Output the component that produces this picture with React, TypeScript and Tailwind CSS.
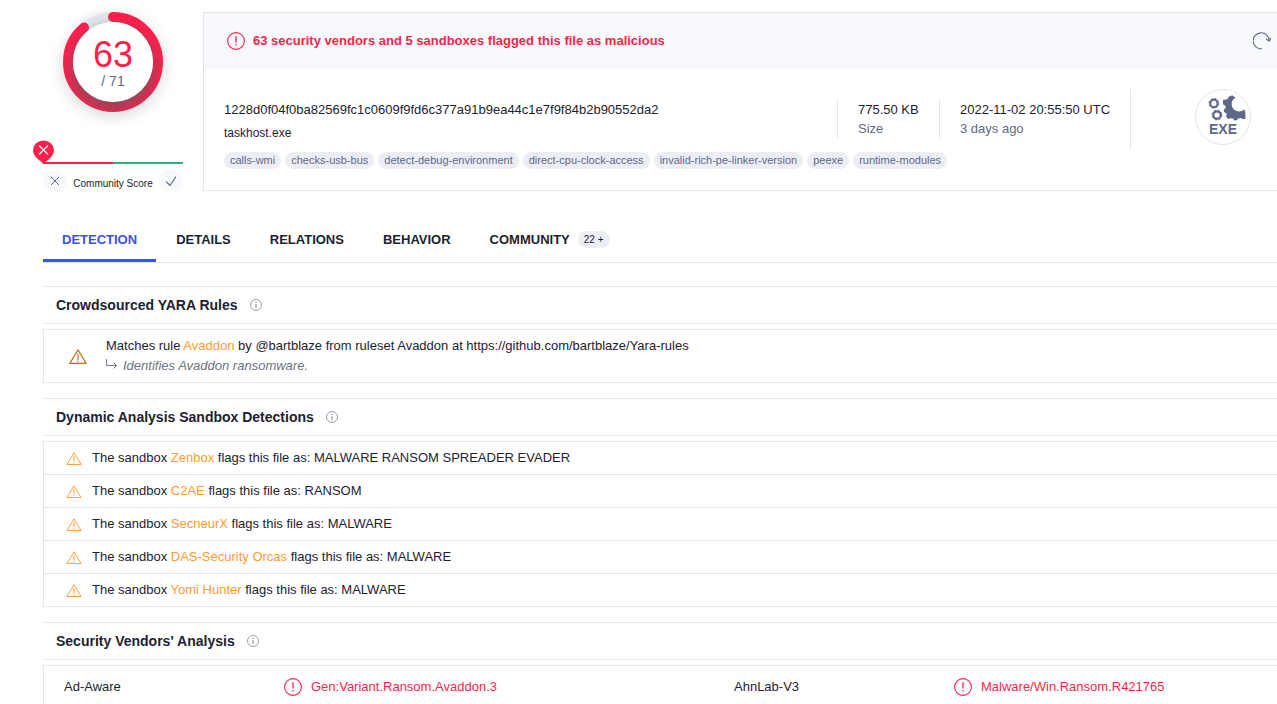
import type { ReactNode } from "react";

const tags = [
  "calls-wmi",
  "checks-usb-bus",
  "detect-debug-environment",
  "direct-cpu-clock-access",
  "invalid-rich-pe-linker-version",
  "peexe",
  "runtime-modules",
];

const tabs = ["DETAILS", "RELATIONS", "BEHAVIOR"];

const sandboxes = [
  { name: "Zenbox", verdict: "MALWARE RANSOM SPREADER EVADER" },
  { name: "C2AE", verdict: "RANSOM" },
  { name: "SecneurX", verdict: "MALWARE" },
  { name: "DAS-Security Orcas", verdict: "MALWARE" },
  { name: "Yomi Hunter", verdict: "MALWARE" },
];

const vendors = [
  ["Ad-Aware", "Gen:Variant.Ransom.Avaddon.3"],
  ["AhnLab-V3", "Malware/Win.Ransom.R421765"],
];

function AlertIcon() {
  return (
    <svg className="size-[18px] shrink-0" viewBox="0 0 18 18" fill="none" stroke="#ff1f4b" aria-hidden="true">
      <circle cx="9" cy="9" r="8.4" strokeWidth="1.1" />
      <path d="M9 4.3V10.6M9 12.2V13.6" strokeWidth="1.3" />
    </svg>
  );
}

function WarningIcon({ className }: { className: string }) {
  return (
    <svg className={className} viewBox="0 0 18 15" fill="none" stroke="currentColor" aria-hidden="true">
      <path d="M9 .9L17.2 14.4H.8Z" strokeWidth="1.1" strokeLinejoin="round" />
      <path d="M9 4.6V10.8M9 11.8V13" strokeWidth="1.2" />
    </svg>
  );
}

function InfoIcon() {
  return (
    <svg className="size-3" viewBox="0 0 12 12" fill="none" stroke="#8d93a8" aria-hidden="true">
      <circle cx="6" cy="6" r="5.5" strokeWidth="0.9" />
      <path d="M6 2.8V4M6 5V9.2" strokeWidth="1.1" />
    </svg>
  );
}

function ScoreRing() {
  return (
    <div className="relative size-[100px] rounded-full shadow-[0_4px_16px_rgba(0,0,0,0.16)]">
      <svg className="size-full" viewBox="0 0 100 100" fill="none" aria-hidden="true">
        <circle cx="50" cy="50" r="45" stroke="#e6e8ee" strokeWidth="10" />
        <circle
          cx="50"
          cy="50"
          r="45"
          stroke="#ff1f4b"
          strokeWidth="10"
          strokeLinecap="round"
          strokeDasharray="250.9 282.8"
          transform="rotate(-90 50 50)"
        />
      </svg>
      <div className="absolute inset-0 overflow-hidden rounded-full p-[10px]">
        <div className="flex size-full flex-col items-center rounded-full bg-white pt-[15px] shadow-[0_6px_16px_rgba(70,100,100,0.75)]">
          <span className="text-[36px] leading-9 text-[#ff1f4b]">63</span>
          <span className="text-[14px] leading-4 text-[#5f6887]">/ 71</span>
        </div>
      </div>
    </div>
  );
}

function CommunityScore() {
  return (
    <div className="mt-[50px] w-full">
      <div className="relative flex h-0.5">
        <div className="flex-1 bg-[#ff1f4b]" />
        <div className="flex-1 bg-[#27b376]" />
        <svg className="absolute bottom-0 -left-[10px] h-6 w-[21px]" viewBox="0 0 21 24" fill="none" aria-hidden="true">
          <path d="M10.5 24C7.5 20.500 0 17 0 10A10.500 9.500 0 0 1 21 10C21 17 13.500 20.500 10.500 24Z" fill="#ff1f4b" />
          <path d="M6 5.500L15 14.500M15 5.500L6 14.500" stroke="#fff" strokeWidth="1.200" />
        </svg>
      </div>
      <div className="mt-[5px] flex items-center justify-between">
        <button type="button" aria-label="Vote malicious" className="flex size-6 items-center justify-center rounded-full bg-[#f8f9fc]">
          <svg className="size-2" viewBox="0 0 8 8" fill="none" stroke="#5f6887" aria-hidden="true">
            <path d="M0 0L8 8M8 0L0 8" />
          </svg>
        </button>
        <span className="pt-1.5 text-[10px] leading-4 whitespace-nowrap text-[#1d2230]">Community Score</span>
        <button type="button" aria-label="Vote harmless" className="flex size-6 items-center justify-center rounded-full bg-[#f8f9fc]">
          <svg className="size-2.5" viewBox="0 0 10 10" fill="none" stroke="#5f6887" aria-hidden="true">
            <path d="M0 5.500L4 9.500L10 .5" strokeWidth="1.100" />
          </svg>
        </button>
      </div>
    </div>
  );
}

function ExeBadge() {
  return (
    <svg className="size-14 shrink-0" viewBox="0 0 56 56" role="img" aria-label="EXE">
      <circle cx="28" cy="28" r="27.5" fill="#fff" stroke="#e5e5e8" />
      <g fill="none" stroke="#5f6887">
        <circle cx="18.900" cy="14.400" r="3.700" strokeWidth="2.200" />
        <circle cx="18.900" cy="14.400" r="4.900" strokeWidth="1" strokeDasharray="1.930 1.920" />
        <circle cx="22" cy="26" r="3.700" strokeWidth="2.200" />
        <circle cx="22" cy="26" r="4.900" strokeWidth="1" strokeDasharray="1.930 1.920" />
      </g>
      <path
        fill="#5f6887"
        d="M32.300 10.300L34 7.600L37.300 6.300L38.600 7.600L40.700 8.600C37.800 10.200 36.400 12.800 36.700 15.700C37 19.500 40.300 22.400 44.300 22.400C46.500 22.300 48 21.500 49.300 20.200L50.400 24V29.900L48 30.300L46 29L43 29.500L42.300 31L39.300 31.400L38 29.600L35.700 29.200L33.500 30L31.200 28L31.700 24.600L29.300 23.200L28.700 21L30.800 18.500L30.500 17L28 15.200V11Z"
      />
      <text x="28" y="45" textAnchor="middle" fontSize="14" fontWeight="700" fill="#5f6887">
        EXE
      </text>
    </svg>
  );
}

function Stat({ value, label, className }: { value: string; label: string; className: string }) {
  return (
    <div className={`shrink-0 border-l border-[#e5e5e8] pl-5 leading-[19px] whitespace-nowrap ${className}`}>
      <div>{value}</div>
      <div className="text-[#5f6887]">{label}</div>
    </div>
  );
}

function Section({ title, children }: { title: string; children: ReactNode }) {
  return (
    <section>
      <header className="flex items-center gap-3 border-y border-[#e5e5e8] px-[13px] py-2">
        <h2 className="text-[14px] leading-5 font-bold">{title}</h2>
        <InfoIcon />
      </header>
      <div className="mt-[5px] border-t border-l border-[#e5e5e8]">{children}</div>
    </section>
  );
}

export default function App() {
  return (
    <main className="bg-white pt-3 pl-[43px] font-['Liberation_Sans',Arial,sans-serif] text-[13px] leading-5 text-[#1d2230]">
      <div className="flex gap-5">
        <aside className="flex w-[140px] shrink-0 flex-col items-center">
          <ScoreRing />
          <CommunityScore />
        </aside>

        <section className="min-w-0 flex-1 self-start border-y border-l border-[#e5e5e8]">
          <div className="flex items-center gap-2 bg-[#f8f9fc] py-[18px] pr-1.5 pl-[23px]">
            <AlertIcon />
            <p className="flex-1 font-bold text-[#ff1f4b]">63 security vendors and 5 sandboxes flagged this file as malicious</p>
            <button type="button" aria-label="Reanalyze" className="size-[18px]">
              <svg viewBox="0 0 18 18" fill="none" stroke="#5f6887" strokeWidth="1.100" aria-hidden="true">
                <path d="M8.800 16.800A8 8 0 1 1 16.200 8.800" />
                <path d="M13 6.800L16.100 9.200L18 5.800" />
              </svg>
            </button>
          </div>
          <div className="flex items-start pt-5 pr-[26px] pb-[21px] pl-5">
            <div className="min-w-0 flex-1 pt-[11px]">
              <div className="flex items-start">
                <div className="min-w-0 flex-1">
                  <p>1228d0f04f0ba82569fc1c0609f9fd6c377a91b9ea44c1e7f9f84b2b90552da2</p>
                  <p className="mt-1 text-[12px] leading-[18px]">taskhost.exe</p>
                </div>
                <Stat value="775.50 KB" label="Size" className="w-[102px]" />
                <Stat value="2022-11-02 20:55:50 UTC" label="3 days ago" className="w-[191px]" />
              </div>
              <div className="mt-2.5 flex flex-wrap gap-1">
                {tags.map((tag) => (
                  <a key={tag} href="#" className="rounded-full bg-[#edeef5] px-1.5 text-[11px] leading-[17px] whitespace-nowrap text-[#5f6887]">
                    {tag}
                  </a>
                ))}
              </div>
            </div>
            <div className="flex h-[61px] shrink-0 border-l border-[#e5e5e8] pl-16">
              <ExeBadge />
            </div>
          </div>
        </section>
      </div>

      <nav className="mt-[23px] flex gap-px border-b border-[#e5e5e8] font-bold">
        <a href="#" className="border-b-[3px] border-[#3b4ffb] px-[19px] pt-[14px] pb-[9px] text-[#3b4ffb]">
          DETECTION
        </a>
        {tabs.map((tab) => (
          <a key={tab} href="#" className="px-[19px] pt-[14px] pb-3">
            {tab}
          </a>
        ))}
        <a href="#" className="flex items-start gap-2 px-[19px] pt-[14px] pb-3">
          COMMUNITY
          <span className="mt-px rounded-full bg-[#edeef5] px-1.5 text-[10px] leading-[17px] font-normal">22 +</span>
        </a>
      </nav>

      <div className="mt-[23px] flex flex-col gap-[15px]">
        <Section title="Crowdsourced YARA Rules">
          <div className="flex items-center gap-[19px] border-b border-[#e5e5e8] py-1.5 pl-[25px]">
            <WarningIcon className="h-[15px] w-[18px] text-[#b5701c]" />
            <div>
              <p>
                Matches rule{" "}
                <a href="#" className="text-[#ff9a35]">
                  Avaddon
                </a>{" "}
                by @bartblaze from ruleset Avaddon at https://github.com/bartblaze/Yara-rules
              </p>
              <p className="flex items-center gap-1.5 text-[#6b7280] italic">
                <svg className="mb-1 h-2.5 w-[11px]" viewBox="0 0 11 10" fill="none" stroke="#737b8c" aria-hidden="true">
                  <path d="M.5 0V6.500H10.500M7.500 3.500L10.500 6.500L7.500 9.500" />
                </svg>
                Identifies Avaddon ransomware.
              </p>
            </div>
          </div>
        </Section>

        <Section title="Dynamic Analysis Sandbox Detections">
          <ul>
            {sandboxes.map((s) => (
              <li key={s.name} className="flex items-center gap-2.5 border-b border-[#e5e5e8] py-1.5 pl-[22px]">
                <WarningIcon className="h-[13px] w-4 text-[#ff9a35]" />
                <p>
                  The sandbox{" "}
                  <a href="#" className="text-[#ff9a35]">
                    {s.name}
                  </a>{" "}
                  flags this file as: {s.verdict}
                </p>
              </li>
            ))}
          </ul>
        </Section>

        <Section title="Security Vendors' Analysis">
          <table className="w-full table-fixed text-left">
            <colgroup>
              <col className="w-[240px]" />
              <col className="w-[430px]" />
              <col className="w-[240px]" />
              <col />
            </colgroup>
            <tbody>
              <tr>
                {vendors.map(([vendor, result]) => [
                  <th key={vendor} scope="row" className="py-[11px] pl-5 font-normal">
                    {vendor}
                  </th>,
                  <td key={result} className="py-[11px] text-[#ff1f4b]">
                    <span className="flex items-center gap-[9px]">
                      <AlertIcon />
                      {result}
                    </span>
                  </td>,
                ])}
              </tr>
            </tbody>
          </table>
        </Section>
      </div>
    </main>
  );
}
